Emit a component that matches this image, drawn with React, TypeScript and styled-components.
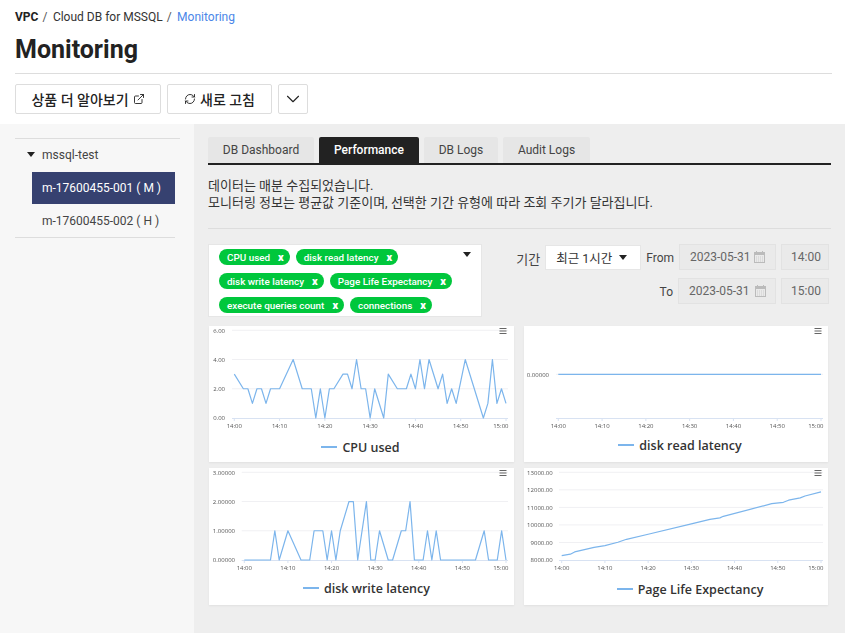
import styled, { createGlobalStyle } from "styled-components"
import { ChevronDown, ExternalLink, RefreshCw } from "lucide-react"

const GlobalStyle = createGlobalStyle`
    * { box-sizing: border-box; }
    html, body { margin: 0; padding: 0; background: #fff; }
    body {
        font-family: Roboto, "Noto Sans CJK KR", sans-serif;
        color: #222;
        font-size: 12px;
    }
`

type ChartProps = {
    title: string
    left: number
    gridLeft: number
    labelEnd: number
    ticks: { label: string; y: number }[]
    points: number[][]
    toY: (v: number) => number
    legendLift: number
    legendOffset: number
}

const minX = (left: number, m: number) => left + (m * (297 - left)) / 60

const cpuData = [[0,3],[2,2],[3,2],[4,1],[5,2],[6,2],[7,1],[8,2],[10,2],[13,4],[15,2],[17,2],[18,0],[19,2],[20,0],[21,2],[22,2],[24,3],[25,3],[26,2],[27,4],[28,2],[29,2],[30,0],[31,2],[33,0],[34,3],[36,2],[38,2],[39,3],[40,2],[41,4],[42,2],[43,4],[45,2],[46,3],[47,1],[48,2],[49,1],[51,4],[55,0],[56,1],[57,4],[58,1],[59,2],[60,1]]
const writeData = [[0,0],[6,0],[7,1],[8,0],[10,1],[13,0],[15,0],[16,1],[18,1],[19,0],[20,1],[21,0],[22,1],[24,2],[25,2],[26,0],[28,2],[29,0],[30,0],[31,1],[33,0],[34,0],[36,1],[37,1],[38,2],[39,0],[41,0],[42,1],[43,0],[44,1],[45,0],[53,0],[55,1],[56,0],[58,0],[59,1],[60,0]]
const readData = [[0,0],[60,0]]
const lifeData = [[0,8250],[2,8330],[3,8460],[7.5,8720],[10,8820],[13,9010],[15,9180],[20,9470],[30,10060],[34.3,10320],[36.6,10400],[37.4,10490],[48.6,11210],[51.3,11290],[52.5,11410],[55.2,11540],[56.3,11650],[60,11880]]

const timeLabels = ["14:00", "14:10", "14:20", "14:30", "14:40", "14:50", "15:00"]

const charts: ChartProps[] = [
    {
        title: "CPU used", left: 25.3, gridLeft: 23, labelEnd: 16,
        ticks: [0, 2, 4, 6].map((v) => ({ label: v.toFixed(2), y: 92 - v * 14.62 })),
        points: cpuData, toY: (v) => 92 - v * 14.62,
        legendLift: 2, legendOffset: -1,
    },
    {
        title: "disk read latency", left: 34.3, gridLeft: 32, labelEnd: 25,
        ticks: [{ label: "0.00000", y: 48.3 }],
        points: readData, toY: () => 48.3,
        legendLift: 6, legendOffset: 4,
    },
    {
        title: "disk write latency", left: 35.3, gridLeft: 32.7, labelEnd: 26,
        ticks: [0, 1, 2, 3].map((v) => ({ label: v.toFixed(5), y: 92 - v * 29.23 })),
        points: writeData, toY: (v) => 92 - v * 29.23,
        legendLift: 5, legendOffset: 5,
    },
    {
        title: "Page Life Expectancy", left: 37.7, gridLeft: 35, labelEnd: 28.7,
        ticks: [8000, 9000, 10000, 11000, 12000, 13000].map((v) => ({ label: v.toFixed(2), y: 92 - (v - 8000) * 0.01754 })),
        points: lifeData, toY: (v) => 92 - (v - 8000) * 0.01754,
        legendLift: 3, legendOffset: 14,
    },
]

const tags = ["CPU used", "disk read latency", "disk write latency", "Page Life Expectancy", "execute queries count", "connections"]

const CalendarIcon = () => (
    <svg width="11" height="12" viewBox="0 0 11 12">
        <rect x="0.5" y="1.5" width="10" height="10" fill="none" stroke="#bbb" />
        <rect x="0" y="1" width="11" height="3" fill="#bbb" />
        <path d="M2.5 0v2M8.5 0v2" stroke="#bbb" />
        <path d="M2 6h7M2 8h7M2 10h7" stroke="#ccc" strokeDasharray="1 1" />
    </svg>
)

const Chart = ({ title, left, gridLeft, labelEnd, ticks, points, toY, legendLift, legendOffset }: ChartProps) => (
    <ChartCard>
        <ChartSvg width="304" height="108" viewBox="0 0 304 108">
            {ticks.map((t) => (
                <g key={t.label}>
                    {t.y < 91 && <line x1={gridLeft} x2="299" y1={t.y} y2={t.y} stroke="#f0f0f3" />}
                    <AxisText x={labelEnd} y={t.y + 2.3} textAnchor="end">{t.label}</AxisText>
                </g>
            ))}
            <line x1={gridLeft} x2="299" y1="92.5" y2="92.5" stroke="#d8e2f2" />
            {timeLabels.map((label, i) => (
                <g key={label}>
                    <line x1={minX(left, i * 10)} x2={minX(left, i * 10)} y1="92" y2="95" stroke="#d8e2f2" />
                    <AxisText
                        x={i === 6 ? 299.5 : minX(left, i * 10)}
                        y="102"
                        textAnchor={i === 6 ? "end" : "middle"}
                    >
                        {label}
                    </AxisText>
                </g>
            ))}
            <polyline
                fill="none"
                stroke="#7cb5ec"
                strokeWidth="1.2"
                strokeLinejoin="round"
                points={points.map(([m, v]) => `${minX(left, m)},${toY(v)}`).join(" ")}
            />
            <path d="M290.5 2.5h7M290.5 5h7M290.5 7.5h7" stroke="#666" strokeWidth="1.2" />
        </ChartSvg>
        <Legend $lift={legendLift} $offset={legendOffset}>
            <LegendLine />
            {title}
        </Legend>
    </ChartCard>
)

export default function App() {
    return (
        <Page>
            <GlobalStyle />
            <Header>
                <Breadcrumb>
                    <strong>VPC</strong>
                    <Slash>/</Slash>
                    <span>Cloud DB for MSSQL</span>
                    <Slash>/</Slash>
                    <CurrentCrumb>Monitoring</CurrentCrumb>
                </Breadcrumb>
                <Title>Monitoring</Title>
                <Toolbar>
                    <ToolButton $width={146}>상품 더 알아보기 <ExternalLink size={12} strokeWidth={1.8} /></ToolButton>
                    <ToolButton $width={105}><RefreshCw size={12} strokeWidth={1.8} /> 새로 고침</ToolButton>
                    <ToolButton $width={30}><ChevronDown size={22} strokeWidth={1.2} /></ToolButton>
                </Toolbar>
            </Header>
            <Body>
                <Sidebar>
                    <Tree>
                        <GroupRow><Caret />mssql-test</GroupRow>
                        <NodeRow $active>m-17600455-001 ( M )</NodeRow>
                        <NodeRow>m-17600455-002 ( H )</NodeRow>
                    </Tree>
                </Sidebar>
                <Main>
                    <Tabs>
                        <Tab $width={106}>DB Dashboard</Tab>
                        <Tab $width={100} $active>Performance</Tab>
                        <Tab $width={74}>DB Logs</Tab>
                        <Tab $width={87}>Audit Logs</Tab>
                    </Tabs>
                    <Notice>
                        데이터는 매분 수집되었습니다.<br />
                        모니터링 정보는 평균값 기준이며, 선택한 기간 유형에 따라 조회 주기가 달라집니다.
                    </Notice>
                    <Filters>
                        <TagSelect>
                            {tags.map((t) => (
                                <TagChip key={t}>{t}<TagClose>x</TagClose></TagChip>
                            ))}
                            <TagCaret />
                        </TagSelect>
                        <Period>
                            <PeriodRow>
                                <KoreanLabel>기간</KoreanLabel>
                                <PeriodSelect>최근 1시간<SmallCaret /></PeriodSelect>
                                <FieldLabel $gap={5}>From</FieldLabel>
                                <DateField $width={97} $iconGap={3}>2023-05-31 <CalendarIcon /></DateField>
                                <TimeField>14:00</TimeField>
                            </PeriodRow>
                            <PeriodRow>
                                <FieldLabel>To</FieldLabel>
                                <DateField $width={98} $iconGap={5}>2023-05-31 <CalendarIcon /></DateField>
                                <TimeField>15:00</TimeField>
                            </PeriodRow>
                        </Period>
                    </Filters>
                    <ChartGrid>
                        {charts.map((c) => <Chart key={c.title} {...c} />)}
                    </ChartGrid>
                </Main>
            </Body>
        </Page>
    )
}

const Page = styled.div`
    width: 845px;
    height: 633px;
    overflow: hidden;
    display: flex;
    flex-direction: column;
`

const Header = styled.header`
    height: 124px;
    padding: 9px 13px 0 15px;
    background: #fff;
`

const Breadcrumb = styled.div`
    display: flex;
    align-items: center;
    height: 16px;
    font-size: 12px;
    color: #333;
    strong { font-weight: 700; color: #222; }
`

const Slash = styled.span`
    margin: 0 5.5px 0 4px;
    color: #555;
`

const CurrentCrumb = styled.span`
    color: #4a86e8;
`

const Title = styled.h1`
    margin: 10px 0 0;
    height: 39px;
    padding-bottom: 9px;
    font-size: 25px;
    line-height: 30px;
    font-weight: 700;
    color: #222;
    border-bottom: 1px solid #ddd;
`

const Toolbar = styled.div`
    display: flex;
    gap: 6px;
    margin-top: 10px;
`

const ToolButton = styled.button<{ $width: number }>`
    width: ${(p) => p.$width}px;
    height: 30px;
    display: flex;
    align-items: center;
    justify-content: center;
    gap: 4px;
    padding: 0;
    background: #fff;
    border: 1px solid #ddd;
    border-radius: 2px;
    font-family: Roboto, "Noto Sans CJK KR", sans-serif;
    font-size: 14px;
    font-weight: 500;
    color: #222;
`

const Body = styled.div`
    flex: 1;
    display: flex;
    min-height: 0;
`

const Sidebar = styled.aside`
    width: 194px;
    padding: 14px 0 0 15px;
    background: #f7f7f7;
`

const Tree = styled.div`
    width: 165px;
    border-top: 1px solid #ddd;
    &::after {
        content: "";
        display: block;
        width: 160px;
        border-bottom: 1px solid #ddd;
    }
`

const GroupRow = styled.div`
    height: 33px;
    display: flex;
    align-items: center;
    padding: 0 0 2px 12px;
    color: #444;
`

const Caret = styled.i`
    width: 0;
    height: 0;
    margin-right: 7px;
    border-left: 4px solid transparent;
    border-right: 4px solid transparent;
    border-top: 5px solid #222;
`

const NodeRow = styled.div<{ $active?: boolean }>`
    width: 143px;
    height: ${(p) => (p.$active ? 32 : 33)}px;
    margin-left: 17px;
    padding-left: 10px;
    display: flex;
    align-items: center;
    background: ${(p) => (p.$active ? "#364170" : "transparent")};
    color: ${(p) => (p.$active ? "#fff" : "#444")};
`

const Main = styled.main`
    flex: 1;
    padding: 13px 14px 0;
    background: #eee;
`

const Tabs = styled.div`
    display: flex;
    gap: 5px;
    height: 28px;
    border-bottom: 2px solid #222;
`

const Tab = styled.div<{ $width: number; $active?: boolean }>`
    width: ${(p) => p.$width}px;
    display: flex;
    align-items: center;
    justify-content: center;
    border-radius: 2px 2px 0 0;
    background: ${(p) => (p.$active ? "#222" : "#e6e6e6")};
    color: ${(p) => (p.$active ? "#fff" : "#444")};
    font-size: 12px;
    font-weight: ${(p) => (p.$active ? 500 : 400)};
`

const Notice = styled.p`
    margin: 0;
    height: 64px;
    padding-top: 12px;
    border-bottom: 1px solid #ddd;
    font-size: 13px;
    line-height: 17px;
    color: #333;
`

const Filters = styled.div`
    display: flex;
    justify-content: space-between;
    margin-top: 15px;
    padding-right: 2px;
`

const TagSelect = styled.div`
    position: relative;
    width: 274px;
    height: 73px;
    padding: 4px 0 0 10px;
    display: flex;
    flex-wrap: wrap;
    align-content: flex-start;
    gap: 8px 6px;
    background: #fff;
    border: 1px solid #e6e6e6;
`

const TagChip = styled.span`
    height: 16px;
    display: inline-flex;
    align-items: center;
    padding: 0 6px 0 8px;
    border-radius: 8px;
    background: #00c73c;
    color: #fff;
    font-size: 9.9px;
    font-weight: 500;
    white-space: nowrap;
`

const TagClose = styled.b`
    margin-left: 8px;
    font-size: 11px;
    font-weight: 900;
`

const TagCaret = styled.i`
    position: absolute;
    top: 7px;
    right: 10px;
    border-left: 4px solid transparent;
    border-right: 4px solid transparent;
    border-top: 5px solid #222;
`

const Period = styled.div`
    display: flex;
    flex-direction: column;
    gap: 8px;
`

const PeriodRow = styled.div`
    display: flex;
    justify-content: flex-end;
    align-items: center;
    height: 26px;
`

const FieldLabel = styled.span<{ $gap?: number }>`
    margin: 2px 5px 0 ${(p) => p.$gap || 0}px;
    font-size: 12px;
    color: #444;
`

const KoreanLabel = styled(FieldLabel)`
    font-size: 13px;
`

const PeriodSelect = styled.div`
    width: 96px;
    height: 25px;
    display: flex;
    align-items: center;
    justify-content: space-between;
    padding: 0 13px 0 10px;
    background: #fff;
    border: 1px solid #e6e6e6;
    font-size: 12.5px;
    color: #333;
`

const SmallCaret = styled.i`
    border-left: 4px solid transparent;
    border-right: 4px solid transparent;
    border-top: 5px solid #222;
`

const DateField = styled.div<{ $width: number; $iconGap: number }>`
    width: ${(p) => p.$width}px;
    height: 26px;
    display: flex;
    align-items: center;
    gap: ${(p) => p.$iconGap}px;
    padding-left: 10px;
    background: #eaeaea;
    border: 1px solid #e2e2e2;
    font-size: 12px;
    color: #666;
`

const TimeField = styled.div`
    width: 48px;
    height: 26px;
    margin-left: 5px;
    display: flex;
    align-items: center;
    justify-content: flex-end;
    padding-right: 7px;
    background: #eaeaea;
    border: 1px solid #e2e2e2;
    font-size: 12px;
    color: #666;
`

const ChartGrid = styled.div`
    display: grid;
    grid-template-columns: 305px 304px;
    grid-template-rows: 136px 137px;
    gap: 6px 10px;
    margin: 9px 0 0 1px;
`

const ChartCard = styled.section`
    display: flex;
    flex-direction: column;
    background: #fff;
    box-shadow: 0 1px 2px rgba(0, 0, 0, 0.06);
`

const ChartSvg = styled.svg`
    display: block;
    flex: none;
    filter: blur(0.5px);
`

const AxisText = styled.text`
    font-family: "Open Sans", Roboto, sans-serif;
    font-size: 6px;
    fill: #555;
`

const Legend = styled.div<{ $lift: number; $offset: number }>`
    flex: 1;
    display: flex;
    align-items: center;
    justify-content: center;
    gap: 5px;
    padding-bottom: ${(p) => p.$lift}px;
    padding-left: ${(p) => Math.max(p.$offset, 0) * 2}px;
    padding-right: ${(p) => Math.max(-p.$offset, 0) * 2}px;
    font-family: "Open Sans", sans-serif;
    font-size: 12.5px;
    font-weight: 600;
    color: #333;
`

const LegendLine = styled.i`
    width: 16px;
    height: 2px;
    background: #7cb5ec;
`
